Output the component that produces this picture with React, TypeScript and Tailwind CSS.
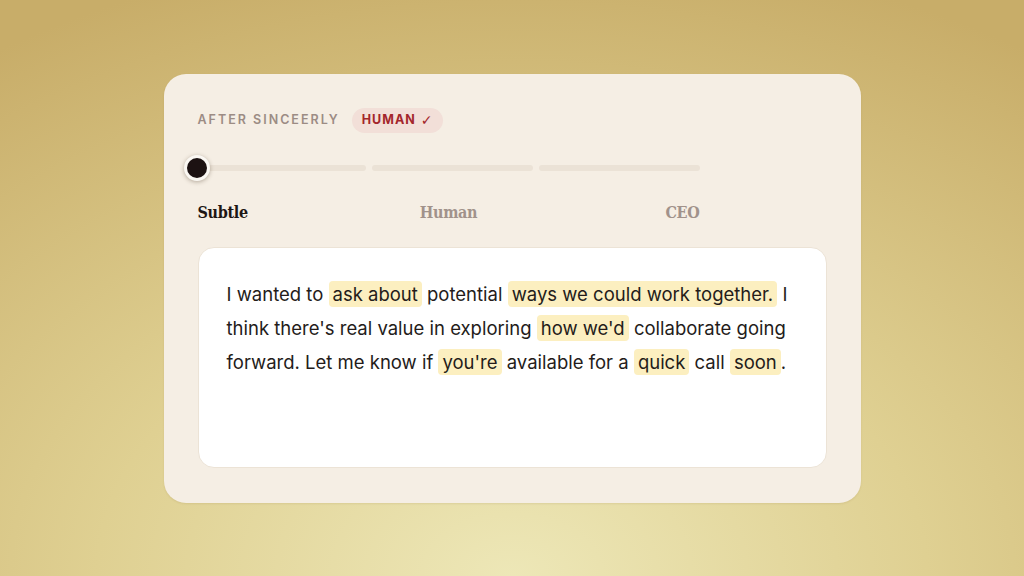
import React from "react";

const H = ({ children }: { children: React.ReactNode }) => (
  <span className="rounded-[4px] bg-[#fcefc0] px-[4px] py-[2px] [box-decoration-break:clone]">{children}</span>
);

export default function App() {
  return (
    <div className="flex h-[576px] w-[1024px] items-start justify-center bg-[radial-gradient(ellipse_90%_110%_at_50%_100%,#ede7b7_0%,#dfd092_45%,#c8ad69_100%)] pt-[74px]">
      <div className="flex h-[429px] w-[697px] flex-col rounded-[22px] bg-[#f5eee4] px-[34px] pt-[34px] shadow-[0_1px_2px_rgba(120,90,30,0.12)]">
        <div className="flex items-center gap-[12px]">
          <span className="font-['Inter',sans-serif] text-[12.5px] font-semibold tracking-[0.16em] text-[#9c8c84]">AFTER SINCEERLY</span>
          <span className="flex h-[25px] items-center gap-[5px] rounded-full bg-[#f2dfd8] px-[10px] font-['Inter',sans-serif] text-[12.5px] font-bold tracking-[0.08em] text-[#a3262b]">
            HUMAN
            <span className="font-['DejaVu_Sans',sans-serif] text-[14px] font-normal tracking-normal">✓</span>
          </span>
        </div>
        <div className="relative mt-[22px] flex h-[26px] w-[502px] items-center gap-[6px] pl-[7px]">
          <div className="h-[6px] flex-1 rounded-full bg-[#ebe2d6]" />
          <div className="h-[6px] flex-1 rounded-full bg-[#ebe2d6]" />
          <div className="h-[6px] flex-1 rounded-full bg-[#ebe2d6]" />
          <div className="absolute left-[-14px] top-0 h-[26px] w-[26px] rounded-full border-[3px] border-[#fbf8f3] bg-[#1c1212] shadow-[0_1px_4px_rgba(60,40,20,0.35)]" />
        </div>
        <div className="mt-[20px] grid w-[502px] grid-cols-3 font-['DejaVu_Serif_Condensed','DejaVu_Serif',serif] text-[16px] font-bold tracking-[-0.02em]">
          <span className="justify-self-start text-[#1e1614]">Subtle</span>
          <span className="justify-self-center text-[#a1928b]">Human</span>
          <span className="justify-self-end text-[#a1928b]">CEO</span>
        </div>
        <div className="mt-[22px] h-[221px] rounded-[16px] border border-[#ece3d6] bg-white px-[28px] pt-[29px] font-['Inter',sans-serif] text-[18.5px] leading-[34px] text-[#241c1a]">
          I wanted to <H>ask about</H> potential <H>ways we could work together.</H> I think there's real value in exploring <H>how we'd</H> collaborate going forward. Let me know if <H>you're</H> available for a <H>quick</H> call <H>soon</H>.
        </div>
      </div>
    </div>
  );
}
